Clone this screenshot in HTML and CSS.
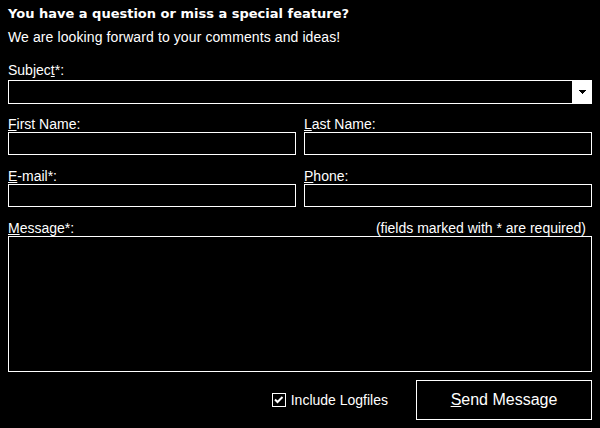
FILE: index.html
```html
<!DOCTYPE html>
<html>
<head>
    <title>Feedback</title>
    <meta charset="utf-8">
    <link rel="stylesheet" href="styles.css">
</head>
<body>
    <div class="form">
        <h1 class="title">You have a question or miss a special feature?</h1>
        <p class="intro">We are looking forward to your comments and ideas!</p>

        <div class="field field-subject">
            <label class="label">Subjec<u>t</u>*:</label>
            <div class="combo">
                <div class="combo-value"></div>
                <div class="combo-btn">
                    <svg width="7" height="4" viewBox="0 0 7 4"><path d="M0 0h7v1h-1v1h-1v1h-1v1h-1v-1h-1v-1h-1v-1h-1z" fill="#000"/></svg>
                </div>
            </div>
        </div>

        <div class="grid">
            <div class="field">
                <label class="label"><u>F</u>irst Name:</label>
                <input class="input" type="text">
            </div>
            <div class="field">
                <label class="label"><u>L</u>ast Name:</label>
                <input class="input" type="text">
            </div>
            <div class="field">
                <label class="label"><u>E</u>-mail*:</label>
                <input class="input" type="text">
            </div>
            <div class="field">
                <label class="label"><u>P</u>hone:</label>
                <input class="input" type="text">
            </div>
        </div>

        <div class="field">
            <div class="label-row">
                <label class="label"><u>M</u>essage*:</label>
                <span class="hint">(fields marked with * are required)</span>
            </div>
            <textarea class="message"></textarea>
        </div>

        <div class="actions">
            <label class="check">
                <span class="check-box">
                    <svg width="12" height="12" viewBox="0 0 12 12"><path d="M2 5.5l2.5 2.5 5-5" fill="none" stroke="#fff" stroke-width="2"/></svg>
                </span>
                Include Logfiles
            </label>
            <button class="send"><u>S</u>end Message</button>
        </div>
    </div>
</body>
</html>
```

FILE: styles.css
```css
/* Base */
* {
    box-sizing: border-box;
    margin: 0;
    padding: 0;
}

body {
    background-color: #000;
    color: #fff;
    font-family: 'Liberation Sans', Arial, sans-serif;
    font-size: 14px;
    line-height: 16px;
}

.form {
    width: 600px;
    padding: 6px 8px 0;
}

.title {
    font-family: 'DejaVu Sans', Verdana, sans-serif;
    font-size: 13px;
    font-weight: bold;
    line-height: 16px;
}

.intro {
    margin-top: 7px;
    letter-spacing: 0.1px;
}

.field {
    display: flex;
    flex-direction: column;
}

.field-subject {
    margin-top: 17px;
}

.label {
    display: block;
    height: 16px;
}

/* Combobox */
.combo {
    display: flex;
    height: 24px;
    margin-top: 2px;
    border: 1px solid #fff;
    border-right: none;
}

.combo-value {
    flex: 1;
}

.combo-btn {
    width: 20px;
    background-color: #fff;
    display: flex;
    align-items: center;
    justify-content: center;
    margin-top: -1px;
    margin-bottom: -1px;
    padding-left: 1px;
}

/* Name / contact grid */
.grid {
    display: grid;
    grid-template-columns: 288px 288px;
    column-gap: 8px;
    row-gap: 13px;
    margin-top: 12px;
}

.input,
.message {
    display: block;
    width: 100%;
    height: 23px;
    background-color: #000;
    color: #fff;
    border: 1px solid #fff;
    border-radius: 0;
    outline: none;
    font: inherit;
    resize: none;
}

.label-row {
    display: flex;
    justify-content: space-between;
    margin-top: 13px;
    padding-right: 6px;
}

.message {
    height: 136px;
}

/* Bottom row */
.actions {
    display: flex;
    justify-content: flex-end;
    align-items: center;
    margin-top: 8px;
}

.check {
    display: flex;
    align-items: center;
    gap: 5px;
    margin-right: 28px;
}

.check-box {
    width: 14px;
    height: 14px;
    border: 1px solid #fff;
    display: flex;
    align-items: center;
    justify-content: center;
}

.send {
    width: 176px;
    height: 40px;
    background-color: #000;
    color: #fff;
    border: 1px solid #fff;
    font-family: inherit;
    font-size: 16px;
}
```
